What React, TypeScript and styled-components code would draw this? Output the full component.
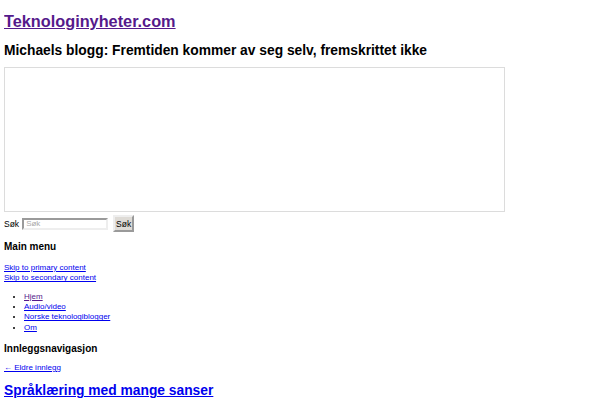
import { createGlobalStyle } from 'styled-components';
import styled from 'styled-components';

const GlobalStyle = createGlobalStyle`
  body {
    margin: 4px;
    font-family: "Liberation Sans", Arial, sans-serif;
    font-size: 8px;
    color: #000;
    background: #fff;
  }
  a { color: #0000ee; }
  a.visited { color: #551a8b; }
`;

const SiteTitle = styled.h1`
  font-size: 16.3px;
  margin: 8px 0 0;
  line-height: 19px;
  a { color: #551a8b; }
`;

const Tagline = styled.h2`
  font-size: 13.8px;
  margin: 12px 0 0;
  line-height: 16px;
`;

const HeaderImage = styled.div`
  width: 499px;
  height: 143px;
  border: 1px solid #dcdcdc;
  margin-top: 8px;
`;

const SearchForm = styled.form`
  display: flex;
  align-items: center;
  gap: 3px;
  margin-top: 3px;
  font-size: 8.5px;
`;

const SearchInput = styled.input`
  width: 78px;
  height: 8px;
  padding: 0 2px;
  font: 8px "Liberation Sans", Arial, sans-serif;
  border: 2px inset #eee;
  &::placeholder { color: #aaa; }
`;

const SearchButton = styled.button`
  font: 8.5px "Liberation Sans", Arial, sans-serif;
  height: 17px;
  width: 21px;
  padding: 0;
  margin-left: 2px;
  background: #dedbd6;
  border: 2px outset #eee;
`;

const SectionHeading = styled.h3<{ $gap: number }>`
  font-size: 10px;
  line-height: 12px;
  margin: ${(p) => p.$gap}px 0 0;
`;

const LinkBlock = styled.div<{ $gap: number }>`
  margin-top: ${(p) => p.$gap}px;
  line-height: 10.3px;
  font-size: 8px;
`;

const MenuList = styled.ul`
  margin: 8px 0 0;
  padding-left: 20px;
  line-height: 10.33px;
  font-size: 8px;
`;

const PostTitle = styled.h2`
  font-size: 13.8px;
  line-height: 16px;
  margin: 10px 0 0;
`;

export default function App() {
  return (
    <>
      <GlobalStyle />
      <SiteTitle><a href="#">Teknologinyheter.com</a></SiteTitle>
      <Tagline>Michaels blogg: Fremtiden kommer av seg selv, fremskrittet ikke</Tagline>
      <HeaderImage />
      <SearchForm onSubmit={(e) => e.preventDefault()}>
        <label>Søk</label>
        <SearchInput placeholder="Søk" />
        <SearchButton type="submit">Søk</SearchButton>
      </SearchForm>
      <SectionHeading $gap={9}>Main menu</SectionHeading>
      <LinkBlock $gap={10}>
        <div><a href="#">Skip to primary content</a></div>
        <div><a href="#">Skip to secondary content</a></div>
      </LinkBlock>
      <MenuList>
        <li><a className="visited" href="#">Hjem</a></li>
        <li><a href="#">Audio/video</a></li>
        <li><a href="#">Norske teknologiblogger</a></li>
        <li><a href="#">Om</a></li>
      </MenuList>
      <SectionHeading $gap={10}>Innleggsnavigasjon</SectionHeading>
      <LinkBlock $gap={8}><a href="#">← Eldre innlegg</a></LinkBlock>
      <PostTitle><a href="#">Språklæring med mange sanser</a></PostTitle>
    </>
  );
}
